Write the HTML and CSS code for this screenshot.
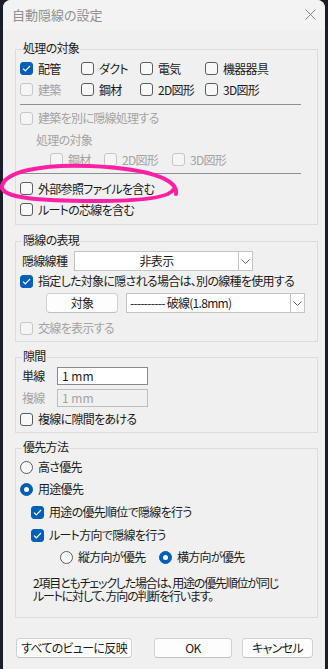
FILE: index.html
```html
<!DOCTYPE html>
<html lang="ja">
<head>
  <meta charset="utf-8">
  <title>自動隠線の設定</title>
  <link rel="stylesheet" href="styles.css">
</head>
<body>
<div class="dialog">
  <div class="titlebar">
    <span class="title">自動隠線の設定</span>
    <svg class="close" width="11" height="11" viewBox="0 0 11 11"><path d="M0.5 0.5L10.5 10.5M10.5 0.5L0.5 10.5" stroke="#8a8a8a" stroke-width="1"/></svg>
  </div>

  <div class="content">
    <!-- 処理の対象 -->
    <div class="group g1">
      <div class="legend">処理の対象</div>
      <div class="grid4">
        <div class="opt"><span class="cb on"><svg width="9" height="7" viewBox="0 0 9 7"><path d="M1 3.6L3.3 5.8L8 1" fill="none" stroke="#fff" stroke-width="1.2"/></svg></span>配管</div>
        <div class="opt"><span class="cb"></span>ダクト</div>
        <div class="opt"><span class="cb"></span>電気</div>
        <div class="opt"><span class="cb"></span>機器器具</div>
        <div class="opt off"><span class="cb"></span>建築</div>
        <div class="opt"><span class="cb"></span>鋼材</div>
        <div class="opt"><span class="cb"></span>2D図形</div>
        <div class="opt"><span class="cb"></span>3D図形</div>
      </div>
      <div class="sep"></div>
      <div class="opt off row-arch"><span class="cb"></span>建築を別に隠線処理する</div>
      <div class="sublabel off">処理の対象</div>
      <div class="subrow off">
        <div class="opt"><span class="cb"></span>鋼材</div>
        <div class="opt"><span class="cb"></span>2D図形</div>
        <div class="opt"><span class="cb"></span>3D図形</div>
      </div>
      <div class="sep sep2"></div>
      <div class="opt row"><span class="cb"></span>外部参照ファイルを含む</div>
      <div class="opt row"><span class="cb"></span>ルートの芯線を含む</div>
    </div>

    <!-- 隠線の表現 -->
    <div class="group g2">
      <div class="legend">隠線の表現</div>
      <div class="linerow">
        <span class="fieldlabel">隠線線種</span>
        <div class="select sel1"><span class="selval center">非表示</span><span class="arrow"><svg width="9" height="5" viewBox="0 0 9 5"><path d="M0.5 0.5L4.5 4.5L8.5 0.5" fill="none" stroke="#606060"/></svg></span></div>
      </div>
      <div class="opt row20"><span class="cb on"><svg width="9" height="7" viewBox="0 0 9 7"><path d="M1 3.6L3.3 5.8L8 1" fill="none" stroke="#fff" stroke-width="1.2"/></svg></span>指定した対象に隠される場合は、別の線種を使用する</div>
      <div class="targetrow">
        <button class="btn btn-target">対象</button>
        <div class="select sel2"><span class="selval">---------- 破線(1.8mm)</span><span class="arrow"><svg width="9" height="5" viewBox="0 0 9 5"><path d="M0.5 0.5L4.5 4.5L8.5 0.5" fill="none" stroke="#606060"/></svg></span></div>
      </div>
      <div class="opt off row20 row-cross"><span class="cb"></span>交線を表示する</div>
    </div>

    <!-- 隙間 -->
    <div class="group g3">
      <div class="legend">隙間</div>
      <div class="inrow">
        <span class="fieldlabel">単線</span>
        <div class="input">1 mm</div>
      </div>
      <div class="inrow off">
        <span class="fieldlabel">複線</span>
        <div class="input disabled">1 mm</div>
      </div>
      <div class="opt row20 row-gap"><span class="cb"></span>複線に隙間をあける</div>
    </div>

    <!-- 優先方法 -->
    <div class="group g4">
      <div class="legend">優先方法</div>
      <div class="opt row20 r1"><span class="rb"></span>高さ優先</div>
      <div class="opt row20 r2"><span class="rb on"></span>用途優先</div>
      <div class="opt row20 r3 indent"><span class="cb on"><svg width="9" height="7" viewBox="0 0 9 7"><path d="M1 3.6L3.3 5.8L8 1" fill="none" stroke="#fff" stroke-width="1.2"/></svg></span>用途の優先順位で隠線を行う</div>
      <div class="opt row20 r3 indent"><span class="cb on"><svg width="9" height="7" viewBox="0 0 9 7"><path d="M1 3.6L3.3 5.8L8 1" fill="none" stroke="#fff" stroke-width="1.2"/></svg></span>ルート方向で隠線を行う</div>
      <div class="dirrow">
        <div class="opt"><span class="rb"></span>縦方向が優先</div>
        <div class="opt"><span class="rb on"></span>横方向が優先</div>
      </div>
      <p class="note">2項目ともチェックした場合は、用途の優先順位が同じ<br>ルートに対して、方向の判断を行います。</p>
    </div>

    <div class="buttons">
      <button class="btn btn-all">すべてのビューに反映</button>
      <button class="btn btn-ok">OK</button>
      <button class="btn btn-cancel">キャンセル</button>
    </div>
  </div>

  <svg class="mark" width="182" height="48" viewBox="0 0 182 48">
    <path d="M176 34 C178 22, 158 9, 90 6 C40 4, 5 12, 2 26 C0 38, 40 41, 95 41 C140 41, 168 38, 173 30" fill="none" stroke="#ff1fa5" stroke-width="4" stroke-linecap="round"/>
  </svg>
</div>
</body>
</html>
```

FILE: styles.css
```css
html, body { margin: 0; padding: 0; }
body { background: #1b1d29; width: 328px; height: 669px; overflow: hidden;
  font-family: "Noto Sans CJK JP", "Noto Sans", sans-serif; font-size: 12px; color: #1a1a1a;
  font-feature-settings: "palt"; letter-spacing: -0.7px; line-height: 14px; }

.dialog { position: relative; margin-left: 3px; width: 322px; height: 669px; background: #f0f0f0; border-radius: 8px 8px 0 0; }
.titlebar { height: 30px; background: #f3f3f3; border-radius: 8px 8px 0 0; display: flex; align-items: center; justify-content: space-between; padding: 0 8px 0 9px; box-sizing: border-box; }
.title { font-size: 13px; color: #8f8f8f; line-height: 16px; margin-top: -1px; letter-spacing: 0; }
.close { margin-top: -1px; margin-right: 1px; }

.content { padding: 19px 7px 0 12px; }

.group { border: 1px solid #dcdcdc; padding: 0 0 0 4px; }
.legend { display: block; width: max-content; height: 14px; line-height: 14px; margin: -9px 0 0 2px; padding: 0 1px; background: #f0f0f0; }
.off { color: #a3a3a3; }

.opt { display: flex; align-items: center; height: 21px; line-height: 14px; white-space: nowrap; }
.cb { width: 13px; height: 13px; box-sizing: border-box; border: 1px solid #5c5c5c; border-radius: 3px; background: #f8f8f8; margin-right: 5px; flex: none; display: flex; align-items: center; justify-content: center; }
.cb.on { background: #005fb8; border-color: #005fb8; }
.off .cb, .off.opt .cb { border-color: #c6c6c6; background: #f5f5f5; }
.rb { width: 13px; height: 13px; box-sizing: border-box; border: 1px solid #5c5c5c; border-radius: 50%; background: #f8f8f8; margin-right: 5px; flex: none; display: flex; align-items: center; justify-content: center; }
.rb.on { background: #005fb8; border-color: #005fb8; }
.rb.on::after { content: ""; width: 5px; height: 5px; border-radius: 50%; background: #fff; }

/* group 1 */
.g1 { padding-bottom: 4px; }
.grid4 { display: grid; grid-template-columns: 61px 59px 65px auto; margin-top: 3px; }
.sep { height: 1px; background: #8f8f8f; margin: 4px 16px 2px 0; }
.sep2 { margin: 4px 16px 4px 0; }
.row-arch { height: 22px; }
.sublabel { height: 21px; line-height: 21px; padding-left: 16px; }
.subrow { display: flex; height: 19px; padding-left: 30px; }
.subrow .opt { height: 19px; }
.subrow .opt:nth-child(1) { width: 54px; }
.subrow .opt:nth-child(2) { width: 68px; }

/* group 2 */
.g2 { margin-top: 16px; padding-bottom: 3px; }
.row20 { height: 20px; }
.linerow { display: flex; align-items: center; height: 20px; margin-top: 4px; }
.fieldlabel { margin-left: 2px; }
.g2 .fieldlabel { width: 52px; }
.select { display: flex; height: 20px; box-sizing: border-box; border: 1px solid #c4c4c4; background: #fff; }
.selval { flex: 1; line-height: 18px; padding-left: 3px; white-space: nowrap; }
.selval.center { text-align: center; padding-left: 0; }
.arrow { width: 13px; border-left: 1px solid #c4c4c4; display: flex; align-items: center; justify-content: center; }
.sel1 { width: 179px; }
.targetrow { display: flex; align-items: center; height: 20px; margin-top: 2px; }
.btn { font-family: inherit; font-size: 12px; color: #1a1a1a; font-feature-settings: "palt"; letter-spacing: -0.7px; height: 20px; padding: 0; box-sizing: border-box; border: 1px solid #d0d0d0; border-bottom-color: #c0c0c0; border-radius: 4px; background: #fdfdfd; line-height: 18px; }
.btn-target { width: 72px; margin-left: 26px; margin-right: 8px; }
.sel2 { width: 179px; }
.row-cross { margin-top: 5px; }

/* group 3 */
.g3 { margin-top: 15px; padding-bottom: 3px; }
.inrow { display: flex; align-items: center; height: 18px; margin-top: 4px; }
.g3 .fieldlabel { width: 35px; }
.input { width: 91px; height: 18px; box-sizing: border-box; border: 1px solid #8a8a8a; background: #fff; line-height: 16px; padding-left: 4px; letter-spacing: 0; }
.input.disabled { background: #f0f0f0; border-color: #bdbdbd; color: #a3a3a3; }
.row-gap { margin-top: 2px; }

/* group 4 */
.g4 { margin-top: 15px; padding-bottom: 15px; }
.r1 { margin-top: 3px; }
.r2 { margin-top: 2px; }
.r3 { margin-top: 3px; }
.indent { padding-left: 11px; }
.dirrow { display: flex; height: 20px; margin-top: 2px; padding-left: 40px; }
.dirrow .opt { height: 20px; }
.dirrow .opt:first-child { width: 99px; }
.note { margin: 9px 0 0 13px; line-height: 13px; letter-spacing: -1.2px; }

.buttons { display: flex; margin-top: 20px; }
.btn-all { width: 116px; margin-left: 1px; }
.btn-ok { width: 78px; margin-left: 22px; }
.btn-cancel { width: 71px; margin-left: 10px; }

.mark { position: absolute; left: -3px; top: 160px; }
```
